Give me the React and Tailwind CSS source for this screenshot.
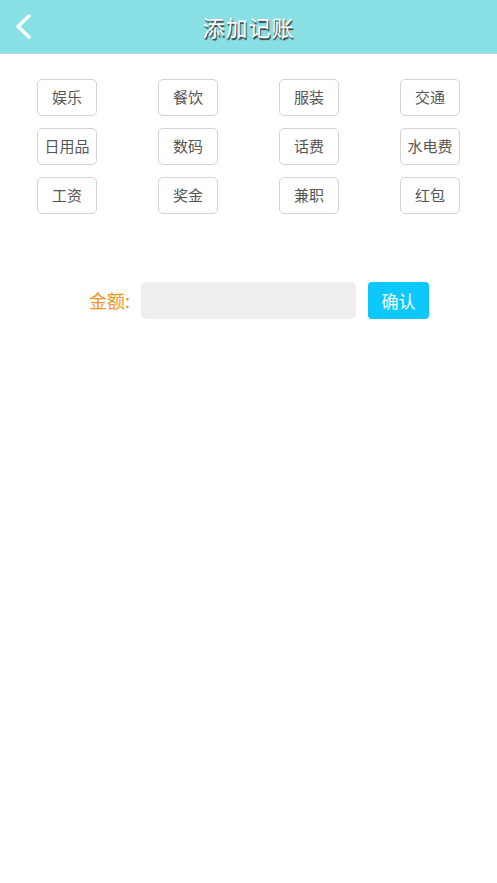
import React from 'react'

const font = { fontFamily: '"Noto Sans CJK SC", "Noto Sans", sans-serif' }

const rows = [
  ['娱乐', '餐饮', '服装', '交通'],
  ['日用品', '数码', '话费', '水电费'],
  ['工资', '奖金', '兼职', '红包'],
]

const App = () => {
  return (
    <div className="w-[497px] h-[883px] bg-white" style={font}>
      {/* Header */}
      <div className="relative h-[54px] bg-[#88e0e4] border-b border-[#c9d3d4] flex items-center justify-center">
        <svg className="absolute left-[13px] top-[13px]" width="20" height="27" viewBox="0 0 20 27">
          <path d="M16 3 L5 13.5 L16 24" fill="none" stroke="white" strokeWidth="3.5" strokeLinecap="round" strokeLinejoin="round" />
        </svg>
        <h1 className="text-[22px] text-white tracking-[1px] [text-shadow:1px_2px_1px_#3a3a3a]">添加记账</h1>
      </div>

      {/* Categories */}
      <div className="px-[37px] pt-[25px] flex flex-col gap-[12px]">
        {rows.map((row, i) => (
          <div key={i} className="flex justify-between">
            {row.map((name) => (
              <button
                key={name}
                className="w-[60px] h-[37px] rounded-[5px] border border-[#d2d2d2] bg-white text-[15px] text-[#555] flex items-center justify-center"
              >
                {name}
              </button>
            ))}
          </div>
        ))}
      </div>

      {/* Amount */}
      <div className="flex items-center pl-[89px] mt-[68px]">
        <span className="text-[18px] text-[#f39422] w-[52px]">金额:</span>
        <div className="w-[215px] h-[37px] rounded-[5px] bg-[#eeeeee]" />
        <button className="ml-[12px] w-[61px] h-[37px] rounded-[4px] bg-[#0dc8fd] text-white text-[17px] flex items-center justify-center">
          确认
        </button>
      </div>
    </div>
  )
}

export default App
